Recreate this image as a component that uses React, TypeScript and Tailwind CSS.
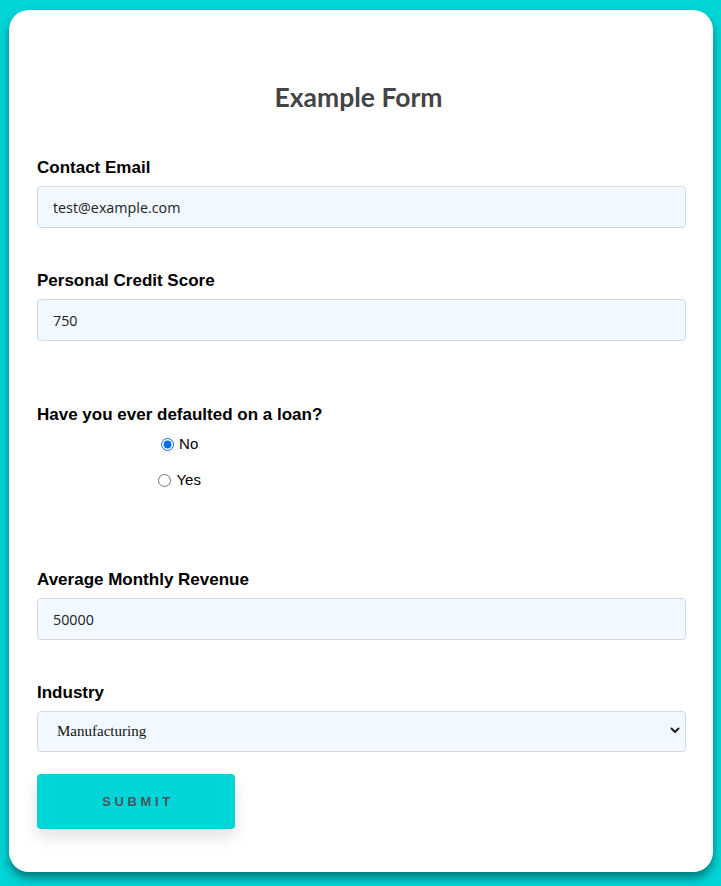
import { useState } from 'react';

const inputCls =
    "w-full h-[42px] pl-[15px] pr-4 bg-[#f1f8ff] border border-[#d4d9e0] rounded-[4px] text-[14.3px] text-[#222] outline-none font-['Open_Sans',sans-serif]"

const labelCls = "block mb-[9px] text-[17px] leading-[18px] font-bold text-black font-['Liberation_Sans',Arial,sans-serif]"

const App = () => {
    const [email, setEmail] = useState('test@example.com')
    const [score, setScore] = useState('750')
    const [defaulted, setDefaulted] = useState('no')
    const [revenue, setRevenue] = useState('50000')
    const [industry, setIndustry] = useState('Manufacturing')

    return (
        <div className="min-h-[886px] bg-[#00d5d7] pt-[10px] pl-[9px] pr-[8px] pb-[14px] font-['Liberation_Sans',Arial,sans-serif]">
            <div className="bg-white rounded-[20px] shadow-[0_6px_10px_rgba(0,60,60,0.6)] pl-[28px] pr-[27px] pt-[72px] pb-[43px]">
                <h1 className="text-center text-[26.5px] leading-[30px] font-bold text-[#444] font-['Lato',sans-serif] mb-[47px] pr-[6px]">
                    Example Form
                </h1>

                <form onSubmit={(e) => e.preventDefault()}>
                    <div className="mb-[44px]">
                        <label className={labelCls}>Contact Email</label>
                        <input className={inputCls} value={email} onChange={(e) => setEmail(e.target.value)} />
                    </div>

                    <div className="mb-[62px]">
                        <label className={labelCls}>Personal Credit Score</label>
                        <input className={inputCls} value={score} onChange={(e) => setScore(e.target.value)} />
                    </div>

                    <div className="inline-flex flex-col items-center mb-[82px]">
                        <div className={labelCls + " !mb-[11px] text-[16.9px]"}>Have you ever defaulted on a loan?</div>
                        <label className="flex items-center text-[15px] leading-[18px] text-black h-[18px]">
                            <input
                                type="radio"
                                name="defaulted"
                                className="w-[13px] h-[13px] mr-[5px] accent-[#0a6ee8]"
                                checked={defaulted === 'no'}
                                onChange={() => setDefaulted('no')}
                            />
                            No
                        </label>
                        <label className="flex items-center text-[15px] leading-[18px] text-black h-[18px] mt-[18px]">
                            <input
                                type="radio"
                                name="defaulted"
                                className="w-[13px] h-[13px] mr-[5px]"
                                checked={defaulted === 'yes'}
                                onChange={() => setDefaulted('yes')}
                            />
                            Yes
                        </label>
                    </div>

                    <div className="mb-[44px]">
                        <label className={labelCls}>Average Monthly Revenue</label>
                        <input className={inputCls} value={revenue} onChange={(e) => setRevenue(e.target.value)} />
                    </div>

                    <div className="mb-[22px]">
                        <label className={labelCls}>Industry</label>
                        <div className="relative">
                            <select
                                className="w-full h-[41px] pl-[19px] pr-8 appearance-none bg-[#f1f8ff] border border-[#d4d9e0] rounded-[4px] text-[15px] text-[#111] font-['Liberation_Serif',serif] outline-none"
                                value={industry}
                                onChange={(e) => setIndustry(e.target.value)}
                            >
                                <option>Manufacturing</option>
                                <option>Retail</option>
                                <option>Technology</option>
                                <option>Services</option>
                            </select>
                            <svg className="absolute right-[6px] top-[16px] pointer-events-none" width="10" height="7" viewBox="0 0 10 7">
                                <path d="M1.5 1.5 L5 5 L8.5 1.5" fill="none" stroke="#222" strokeWidth="2" strokeLinecap="round" strokeLinejoin="round" />
                            </svg>
                        </div>
                    </div>

                    <button
                        type="submit"
                        className="w-[198px] h-[55px] bg-[#00d5d7] rounded-[4px] shadow-[0_8px_16px_rgba(0,0,0,0.12)] text-[13px] font-bold tracking-[3.6px] text-[#4a5560] pl-[4px]"
                    >
                        SUBMIT
                    </button>
                </form>
            </div>
        </div>
    );
};

export default App;
